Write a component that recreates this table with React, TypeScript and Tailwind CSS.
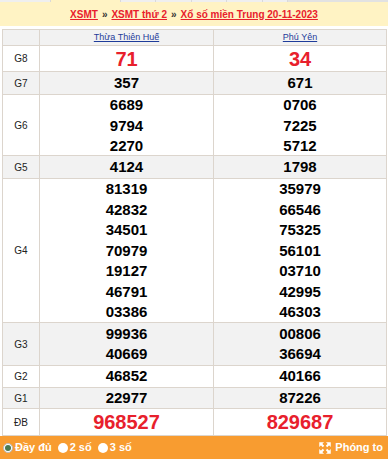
const rows = [
  { label: "G8", h: "h-[26px]", big: true, a: ["71"], b: ["34"] },
  { label: "G7", h: "h-[23px]", a: ["357"], b: ["671"] },
  { label: "G6", h: "h-[61px]", a: ["6689", "9794", "2270"], b: ["0706", "7225", "5712"] },
  { label: "G5", h: "h-[23px]", a: ["4124"], b: ["1798"] },
  {
    label: "G4",
    h: "h-[144px]",
    a: ["81319", "42832", "34501", "70979", "19127", "46791", "03386"],
    b: ["35979", "66546", "75325", "56101", "03710", "42995", "46303"],
  },
  { label: "G3", h: "h-[43px]", a: ["99936", "40669"], b: ["00806", "36694"] },
  { label: "G2", h: "h-[22px]", a: ["46852"], b: ["40166"] },
  { label: "G1", h: "h-[21px]", a: ["22977"], b: ["87226"] },
  { label: "ĐB", h: "h-[27px]", big: true, a: ["968527"], b: ["829687"] },
];

function Cell({ nums, big, last }: { nums: string[]; big?: boolean; last?: boolean }) {
  return (
    <div className={`flex flex-col items-center justify-center ${last ? "" : "border-r border-[#dcd5cd]"}`}>
      {nums.map((n, i) => (
        <span
          key={i}
          className={
            big
              ? "text-[20px] leading-[24px] font-bold text-[#e8202c]"
              : "text-[15px] leading-[20.5px] font-bold text-black"
          }
        >
          {n}
        </span>
      ))}
    </div>
  );
}

function ExpandIcon() {
  return (
    <svg width="12" height="12" viewBox="0 0 12 12" fill="none" stroke="white" strokeWidth="2">
      <path d="M1.5 1.5l3 3M10.5 1.5l-3 3M1.5 10.5l3-3M10.5 10.5l-3-3" />
      <path d="M0.5 0.5h4l-4 4z M11.5 0.5h-4l4 4z M0.5 11.5h4l-4-4z M11.5 11.5h-4l4-4z" fill="white" strokeWidth="0.5" />
    </svg>
  );
}

export default function App() {
  const tabs = ["w-[50px] bg-[#efefef]", "w-[69px] bg-[#fff3c4]", "w-[34px] bg-[#efefef]", "w-[35px] bg-[#efefef]", "w-[34px] bg-[#efefef]", "w-[35px] bg-[#efefef]", "w-[24px] bg-[#efefef]", "flex-1 bg-[#e2e2e2]"];
  return (
    <div className="w-[388px] h-[459px] bg-white font-['Liberation_Sans',Arial,sans-serif] flex flex-col overflow-hidden">
      <div className="flex h-[2px] gap-px bg-[#d9d9d9]">
        {tabs.map((t, i) => (
          <div key={i} className={t} />
        ))}
      </div>
      <div className="h-[24px] bg-[#fff3c4] flex items-center justify-center text-[10px] font-bold">
        <a className="text-[#e8202c] underline">XSMT</a>
        <span className="mx-[4px] text-[#333]">»</span>
        <a className="text-[#e8202c] underline">XSMT thứ 2</a>
        <span className="mx-[4px] text-[#333]">»</span>
        <a className="text-[#e8202c] underline">Xổ số miền Trung 20-11-2023</a>
      </div>
      <div className="h-[3px]" />
      <div className="ml-[2px] mr-px border border-[#dcd5cd] border-b-0">
        <div className="grid grid-cols-[37px_174px_1fr] h-[16px] bg-[#f2f2f2] border-b border-[#dcd5cd]">
          <div className="border-r border-[#dcd5cd]" />
          <div className="border-r border-[#dcd5cd] flex items-center justify-center text-[9px] text-[#1f3c9a] underline">
            Thừa Thiên Huế
          </div>
          <div className="flex items-center justify-center text-[9px] text-[#1f3c9a] underline">Phú Yên</div>
        </div>
        {rows.map((r, i) => (
          <div
            key={r.label}
            className={`grid grid-cols-[37px_174px_1fr] ${r.h} border-b border-[#dcd5cd] ${i % 2 === 1 ? "bg-[#f2f2f2]" : "bg-white"}`}
          >
            <div className="border-r border-[#dcd5cd] flex items-center justify-center text-[10px] text-[#222]">
              {r.label}
            </div>
            <Cell nums={r.a} big={r.big} />
            <Cell nums={r.b} big={r.big} last />
          </div>
        ))}
      </div>
      <div className="h-[23px] bg-[#f89c30] flex items-center px-[3px] text-white text-[11px] font-bold">
        <span className="w-[10px] h-[10px] rounded-full bg-white border border-[#bbb] flex items-center justify-center">
          <span className="w-[6px] h-[6px] rounded-full bg-[#4a7a52]" />
        </span>
        <span className="ml-[2px]">Đầy đủ</span>
        <span className="ml-[6px] w-[10px] h-[10px] rounded-full bg-white" />
        <span className="ml-[2px]">2 số</span>
        <span className="ml-[6px] w-[10px] h-[10px] rounded-full bg-white" />
        <span className="ml-[2px]">3 số</span>
        <span className="ml-auto flex items-center gap-[4px] mr-[2px]">
          <ExpandIcon />
          Phóng to
        </span>
      </div>
    </div>
  );
}
